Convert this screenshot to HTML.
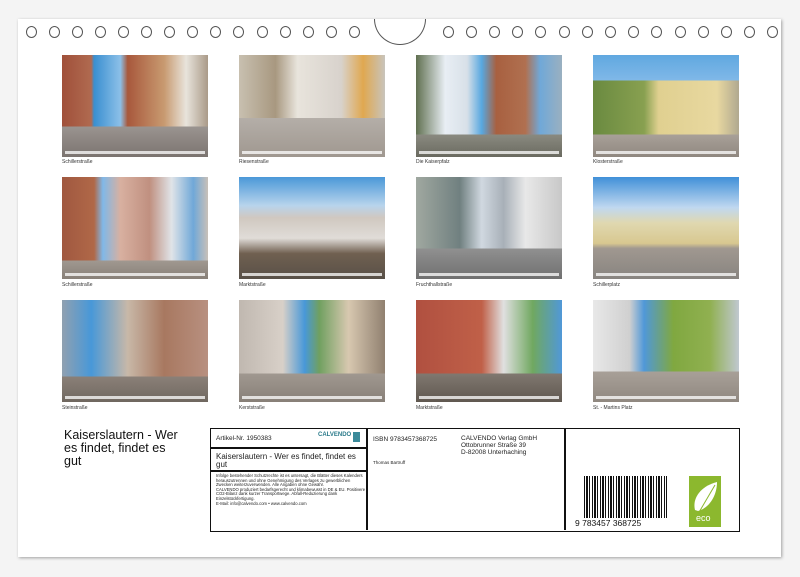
<!DOCTYPE html>
<html><head><meta charset="utf-8"><style>
*{margin:0;padding:0;box-sizing:border-box}
body{width:800px;height:577px;background:#f4f4f4;position:relative;overflow:hidden;font-family:"Liberation Sans",sans-serif}
.card{position:absolute;left:18px;top:19px;width:763px;height:538px;background:#fff;box-shadow:1px 1px 3px rgba(0,0,0,.35)}
.hole{position:absolute;top:26px;width:11px;height:12px;border:1px solid #555;border-radius:50%;background:#fff}
.hook{position:absolute;left:374px;top:19px;width:52px;height:26px;border:1px solid #555;border-top:none;border-radius:0 0 26px 26px;background:#fff}
.ph{position:absolute;width:146px;height:102px;overflow:hidden}
.ph .strip{position:absolute;left:3px;right:3px;bottom:3px;height:3px;background:rgba(255,255,255,.75)}
.lb{position:absolute;font-size:5px;color:#333}
.box{position:absolute;left:210px;top:428px;width:530px;height:104px;border:1.5px solid #111}
.t{position:absolute;color:#222}
</style></head><body>
<div class="card"></div>
<div class="hook"></div>
<div id="holes"></div>

<div class="ph" style="left:62px;top:55px;background:linear-gradient(180deg,rgba(0,0,0,0) 0,rgba(0,0,0,0) 70%,#9a9490 70%,#7c7470 100%),linear-gradient(90deg,#a0503a 0,#b06a50 20%,#3a8fd0 22%,#8cc0e8 40%,#a8583c 45%,#c89a70 70%,#e8e4dc 85%,#aa9a88 100%)"><div class="strip"></div></div>
<div class="ph" style="left:239px;top:55px;background:linear-gradient(180deg,rgba(0,0,0,0) 0,rgba(0,0,0,0) 62%,#b4aea8 62%,#a09890 100%),linear-gradient(90deg,#c8c0b0 0,#a89880 25%,#e8e4dc 40%,#d8d2cc 70%,#e0a850 85%,#c8c4bc 100%)"><div class="strip"></div></div>
<div class="ph" style="left:416px;top:55px;background:linear-gradient(180deg,rgba(0,0,0,0) 0,rgba(0,0,0,0) 78%,#8a8a80 78%,#6a6a60 100%),linear-gradient(90deg,#607050 0,#e8eef4 20%,#d8e0e8 35%,#58a8e0 45%,#a86040 55%,#b07050 75%,#70a8d8 85%,#9ab0c0 100%)"><div class="strip"></div></div>
<div class="ph" style="left:593px;top:55px;background:linear-gradient(180deg,#60a8e0 0,#80b8e8 25%,rgba(0,0,0,0) 25%,rgba(0,0,0,0) 78%,#a8a098 78%,#908880 100%),linear-gradient(90deg,#6a8a40 0,#88a050 35%,#e0d090 45%,#e8d8a0 85%,#b0a890 100%)"><div class="strip"></div></div>

<div class="ph" style="left:62px;top:177px;background:linear-gradient(180deg,rgba(0,0,0,0) 0,rgba(0,0,0,0) 82%,#a09890 82%,#888078 100%),linear-gradient(90deg,#a05840 0,#b06848 22%,#80b8e8 28%,#d8b0a0 40%,#c09080 60%,#e0e4e8 75%,#70a8d8 90%,#c8c0b8 100%)"><div class="strip"></div></div>
<div class="ph" style="left:239px;top:177px;background:linear-gradient(180deg,#4a98d8 0,#b8d4ec 28%,#d0c8c0 40%,#e0dcd8 60%,#706050 75%,#585048 100%)"><div class="strip"></div></div>
<div class="ph" style="left:416px;top:177px;background:linear-gradient(180deg,rgba(0,0,0,0) 0,rgba(0,0,0,0) 70%,#909090 70%,#707070 100%),linear-gradient(90deg,#a0a8a0 0,#708080 30%,#d0d8e0 45%,#a8b0b8 60%,#e8e8e8 75%,#c8c8c8 100%)"><div class="strip"></div></div>
<div class="ph" style="left:593px;top:177px;background:linear-gradient(180deg,#4090d8 0,#c0d8f0 30%,#e0d8b0 45%,#d8c890 65%,#a09890 70%,#888480 100%)"><div class="strip"></div></div>

<div class="ph" style="left:62px;top:300px;background:linear-gradient(180deg,rgba(0,0,0,0) 0,rgba(0,0,0,0) 75%,#8a8078 75%,#706860 100%),linear-gradient(90deg,#90a0b0 0,#4898d8 20%,#c8b8a8 45%,#a87860 70%,#b89080 100%)"><div class="strip"></div></div>
<div class="ph" style="left:239px;top:300px;background:linear-gradient(180deg,rgba(0,0,0,0) 0,rgba(0,0,0,0) 72%,#a09890 72%,#888078 100%),linear-gradient(90deg,#c0b8b0 0,#d8d0c8 30%,#4898d8 45%,#70a060 55%,#d8c8b0 75%,#908070 100%)"><div class="strip"></div></div>
<div class="ph" style="left:416px;top:300px;background:linear-gradient(180deg,rgba(0,0,0,0) 0,rgba(0,0,0,0) 72%,#807870 72%,#605850 100%),linear-gradient(90deg,#b05040 0,#c06048 45%,#e0e0e0 60%,#70a860 80%,#5098d8 100%)"><div class="strip"></div></div>
<div class="ph" style="left:593px;top:300px;background:linear-gradient(180deg,rgba(0,0,0,0) 0,rgba(0,0,0,0) 70%,#a8a098 70%,#908880 100%),linear-gradient(90deg,#e8e8e8 0,#d0d0d0 25%,#5098d8 35%,#80a840 55%,#90b050 80%,#c0c8d0 100%)"><div class="strip"></div></div>

<div class="lb" style="left:62px;top:159px">Schillerstraße</div>
<div class="lb" style="left:239px;top:159px">Riesenstraße</div>
<div class="lb" style="left:416px;top:159px">Die Kaiserpfalz</div>
<div class="lb" style="left:593px;top:159px">Klosterstraße</div>
<div class="lb" style="left:62px;top:282px">Schillerstraße</div>
<div class="lb" style="left:239px;top:282px">Marktstraße</div>
<div class="lb" style="left:416px;top:282px">Fruchthallstraße</div>
<div class="lb" style="left:593px;top:282px">Schillerplatz</div>
<div class="lb" style="left:62px;top:405px">Steinstraße</div>
<div class="lb" style="left:239px;top:405px">Kerststraße</div>
<div class="lb" style="left:416px;top:405px">Marktstraße</div>
<div class="lb" style="left:593px;top:405px">St. - Martins Platz</div>

<div class="t" style="left:64px;top:429px;font-size:12.5px;line-height:13px;width:122px;color:#111">Kaiserslautern - Wer es findet, findet es gut</div>

<div class="box">
 <div style="position:absolute;left:155px;top:0;width:1.5px;height:101px;background:#111"></div>
 <div style="position:absolute;left:353px;top:0;width:1.5px;height:101px;background:#111"></div>
 <div style="position:absolute;left:0;top:18px;width:156px;height:1.5px;background:#111"></div>
 <div style="position:absolute;left:0;top:41px;width:156px;height:1.5px;background:#111"></div>
 <div class="t" style="left:5px;top:6px;font-size:6.5px">Artikel-Nr. 1950383</div>
 <div class="t" style="left:107px;top:3px;font-size:6px;color:#2a7a8a;font-weight:bold">CALVENDO</div>
 <div style="position:absolute;left:142px;top:3px;width:7px;height:10px;background:#3a8a9a"></div>
 <div class="t" style="left:5px;top:24px;font-size:8px;line-height:8px;width:140px">Kaiserslautern - Wer es findet, findet es gut</div>
 <div class="t" style="left:5px;top:45px;font-size:4.2px;line-height:4.6px;width:150px">Infolge bestehender Schutzrechte ist es untersagt, die Blätter dieses Kalenders herauszutrennen und ohne Genehmigung des Verlages zu gewerblichen Zwecken weiterzuverwenden. Alle Angaben ohne Gewähr.<br>CALVENDO produziert bedarfsgerecht und klimabewusst in DE &amp; EU. Positivere CO2-Bilanz dank kurzer Transportwege. Abfall-Reduzierung dank Einzelstückfertigung.<br>E-Mail: info@calvendo.com • www.calvendo.com</div>
 <div class="t" style="left:162px;top:7px;font-size:6.5px">ISBN 9783457368725</div>
 <div class="t" style="left:162px;top:31px;font-size:4.5px">Thomas Bartruff</div>
 <div class="t" style="left:250px;top:6px;font-size:6.5px;line-height:7px">CALVENDO Verlag GmbH<br>Ottobrunner Straße 39<br>D-82008 Unterhaching</div>
 <div style="position:absolute;left:373px;top:47px;width:83px;height:42px;background:repeating-linear-gradient(90deg,#111 0,#111 1px,#fff 1px,#fff 2px,#111 2px,#111 4px,#fff 4px,#fff 5px,#111 5px,#111 6px,#fff 6px,#fff 8px)"></div>
 <div class="t" style="left:363px;top:90px;font-size:8.5px;background:#fff;line-height:9px;padding:0 1px;color:#111">9&nbsp;783457&nbsp;368725</div>
 <div style="position:absolute;left:478px;top:47px;width:32px;height:51px;background:#8cb82e">
  <svg width="32" height="51" viewBox="0 0 32 51"><path d="M6 34C3 22 12 10 28 6C28 20 20 32 9 35Z" fill="#fff"/><path d="M9 38L26 9" stroke="#8cb82e" stroke-width="1"/></svg>
  <div style="position:absolute;left:7px;top:37px;font-size:9px;color:#fff">eco</div>
 </div>
</div>
<script>
var h=document.getElementById('holes'),s='';
for(var i=0;i<15;i++){s+='<div class="hole" style="left:'+(25.5+i*23.1)+'px"></div>';s+='<div class="hole" style="left:'+(442.5+i*23.2)+'px"></div>';}
h.innerHTML=s;
</script>
</body></html>
